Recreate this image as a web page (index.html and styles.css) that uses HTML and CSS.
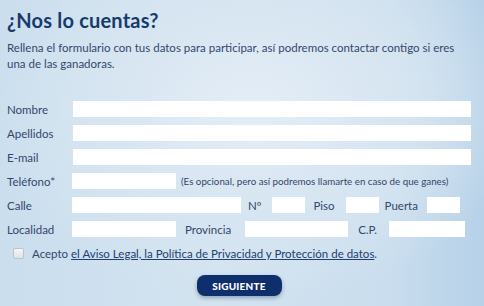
FILE: index.html
```html
<!DOCTYPE html>
<html lang="es">
<head>
<meta charset="utf-8">
<link rel="stylesheet" href="styles.css">
</head>
<body>
<div class="page">
  <h1 class="title">¿Nos lo cuentas?</h1>
  <p class="intro">Rellena el formulario con tus datos para participar, así podremos contactar contigo si eres una de las ganadoras.</p>
  <form class="form">
    <div class="row">
      <label class="lbl">Nombre</label>
      <input class="inp full" type="text">
    </div>
    <div class="row">
      <label class="lbl">Apellidos</label>
      <input class="inp full" type="text">
    </div>
    <div class="row">
      <label class="lbl">E-mail</label>
      <input class="inp full" type="text">
    </div>
    <div class="row">
      <label class="lbl">Teléfono*</label>
      <input class="inp w-tel" type="text">
      <span class="note">(Es opcional, pero así podremos llamarte en caso de que ganes)</span>
    </div>
    <div class="row">
      <label class="lbl">Calle</label>
      <input class="inp w-calle" type="text">
      <label class="lbl-num">Nº</label>
      <input class="inp w-small" type="text">
      <label class="lbl-piso">Piso</label>
      <input class="inp w-small" type="text">
      <label class="lbl-puerta">Puerta</label>
      <input class="inp w-small" type="text">
    </div>
    <div class="row">
      <label class="lbl">Localidad</label>
      <input class="inp w-tel" type="text">
      <label class="lbl-prov">Provincia</label>
      <input class="inp w-prov" type="text">
      <label class="lbl-cp">C.P.</label>
      <input class="inp w-cp" type="text">
    </div>
    <div class="row check-row">
      <span class="checkbox"></span>
      <span class="accept">Acepto <a class="legal" href="#">el Aviso Legal, la Política de Privacidad y Protección de datos</a>.</span>
    </div>
    <div class="actions">
      <button class="btn" type="button">SIGUIENTE</button>
    </div>
  </form>
</div>
</body>
</html>
```

FILE: styles.css
```css
html, body {
  margin: 0;
  padding: 0;
  width: 484px;
  height: 306px;
  overflow: hidden;
}
body {
  background:
    radial-gradient(ellipse 70% 80% at 52% 35%, #e4edf6 0%, #d6e5f1 45%, rgba(205,224,239,0) 80%),
    linear-gradient(90deg, #cadeee 0%, #d3e3f0 45%, #c9ddee 80%, #b6d1e8 100%);
  font-family: Lato, "Open Sans", sans-serif;
  color: #33466b;
}
.page {
  padding: 7px 0 0 7px;
}
.title {
  margin: 0;
  font-size: 20px;
  line-height: 26px;
  font-weight: 700;
  color: #173a6c;
  letter-spacing: 0.2px;
}
.intro {
  margin: 7px 0 0 0;
  font-size: 11.5px;
  line-height: 16px;
  width: 455px;
  color: #34476c;
}
.form {
  margin-top: 29px;
  display: flex;
  flex-direction: column;
  gap: 8px;
}
.row {
  display: flex;
  align-items: center;
  height: 16px;
  font-size: 11.5px;
}
.lbl {
  width: 65px;
  flex: none;
}
.inp {
  height: 16px;
  box-sizing: border-box;
  border: none;
  background: #ffffff;
  padding: 0 3px;
  margin: 0;
  flex: none;
}
.full { width: 398px; margin-left: 1px; }
.w-tel { width: 104px; }
.w-calle { width: 169px; }
.w-small { width: 33px; }
.w-prov { width: 103px; }
.w-cp { width: 76px; }
.note {
  font-size: 9.75px;
  margin-left: 5px;
}
.lbl-num { margin: 0 11px 0 7px; }
.lbl-piso { margin: 0 11px 0 8px; }
.lbl-puerta { margin: 0 9px 0 6px; }
.lbl-prov { margin: 0 14px 0 9px; }
.lbl-cp { margin: 0 12px 0 10px; }
.checkbox {
  width: 9px;
  height: 9px;
  margin: 0 8px 0 6px;
  border: 1px solid #b9c3cc;
  border-radius: 2px;
  background: linear-gradient(#f4f6f8, #dde3e8);
}
.accept {
  color: #33466b;
}
.legal {
  color: #22406f;
  text-decoration: underline;
}
.actions {
  display: flex;
  justify-content: center;
  margin-top: 6px;
  padding-right: 13px;
}
.btn {
  width: 85px;
  height: 21px;
  border: none;
  border-radius: 8px;
  background: #0f2f6c;
  color: #ffffff;
  font-family: Lato, sans-serif;
  font-weight: 900;
  font-size: 10px;
  letter-spacing: 0.2px;
  box-shadow: 0 2px 4px rgba(20, 40, 80, 0.35);
  padding: 0;
}
```
